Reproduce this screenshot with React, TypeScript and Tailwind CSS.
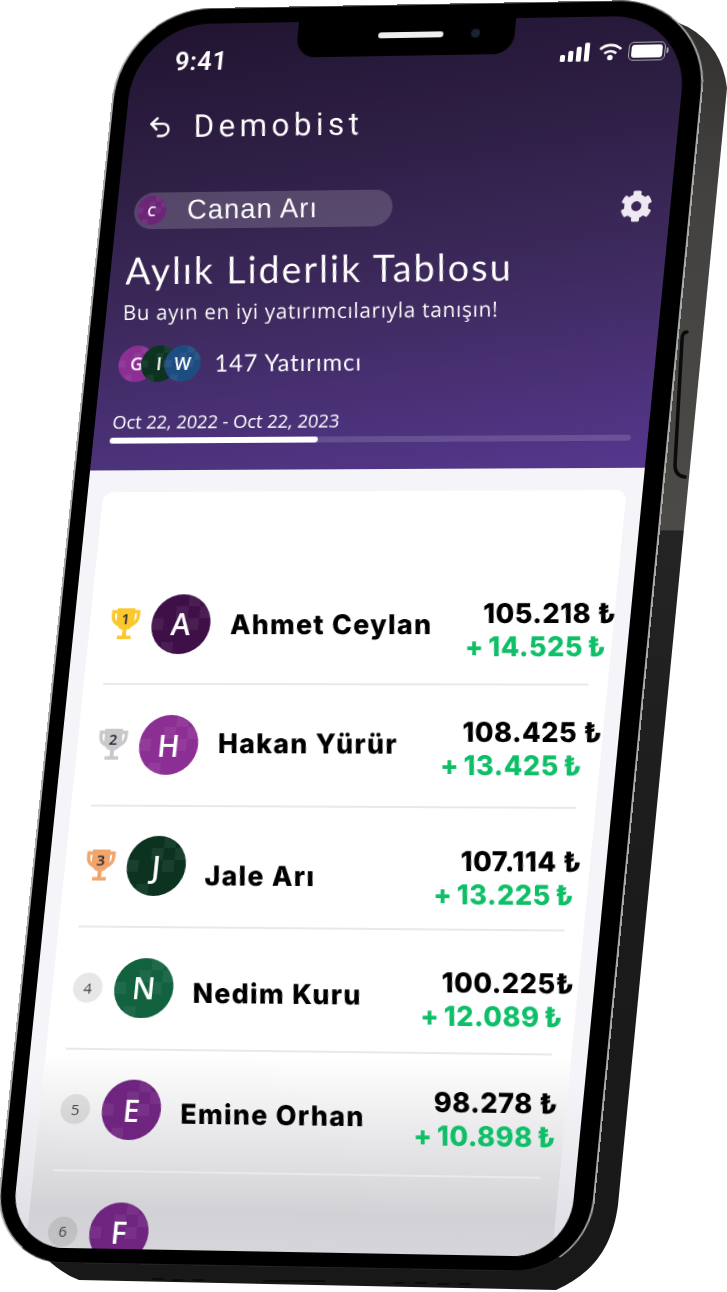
import { Undo2 } from 'lucide-react'
import { FaCog } from 'react-icons/fa'

const rows = [
  { rank: 1, letter: 'A', avatar: 'bg-[#3f1048]', name: 'Ahmet Ceylan', nameY: 'translate-y-[1px]', total: '105.218 ₺', gain: '+ 14.525 ₺', amountY: 'translate-y-[6px]', totalMr: 'mr-[2px]', gainMr: 'mr-[9px]', trophy: '#fbc92e' },
  { rank: 2, letter: 'H', avatar: 'bg-[#8c2f94]', name: 'Hakan Yürür', nameY: '-translate-y-[2px]', total: '108.425 ₺', gain: '+ 13.425 ₺', amountY: 'translate-y-[3px]', totalMr: 'mr-[5px]', gainMr: 'mr-[22px]', trophy: '#c9c9c9' },
  { rank: 3, letter: 'J', avatar: 'bg-[#0b3320]', name: 'Jale Arı', nameY: 'translate-y-[9px]', total: '107.114 ₺', gain: '+ 13.225 ₺', amountY: 'translate-y-[10px]', totalMr: 'mr-[13px]', gainMr: 'mr-[17px]', trophy: '#f0a56c' },
  { rank: 4, letter: 'N', avatar: 'bg-[#12613f]', name: 'Nedim Kuru', nameY: 'translate-y-[5px]', total: '100.225₺', gain: '+ 12.089 ₺', amountY: 'translate-y-[8px]', totalMr: 'mr-[8px]', gainMr: 'mr-[16px]' },
  { rank: 5, letter: 'E', avatar: 'bg-[#6f2580]', name: 'Emine Orhan', nameY: 'translate-y-[3px]', total: '98.278 ₺', gain: '+ 10.898 ₺', amountY: 'translate-y-[5px]', totalMr: 'mr-[13px]', gainMr: 'mr-[12px]' },
  { rank: 6, letter: 'F', avatar: 'bg-[#6f2580]' },
]

const Avatar = ({ letter, color, size, text }: { letter: string; color: string; size: string; text: string }) => (
  <div className={`relative flex shrink-0 items-center justify-center overflow-hidden rounded-full font-['Open_Sans',sans-serif] font-semibold text-white ${color} ${size} ${text}`}>
    <svg className="absolute inset-0 h-full w-full" viewBox="0 0 10 10" fill="#fff" fillOpacity="0.06">
      <rect x="6" y="0" width="2" height="2" />
      <rect x="4" y="2" width="2" height="2" />
      <rect x="8" y="2" width="2" height="2" />
      <rect x="0" y="4" width="2" height="2" />
      <rect x="6" y="4" width="2" height="2" />
      <rect x="2" y="8" width="2" height="2" />
    </svg>
    <span className="relative">{letter}</span>
  </div>
)

const Trophy = ({ rank, color }: { rank: number; color: string }) => (
  <div className="relative h-[32px] w-[30px]">
    <svg className="absolute inset-0" width="30" height="32" viewBox="0 0 30 32">
      <path d="M7 3.5H2.2v4c0 5 3 8 7 9M23 3.5h4.8v4c0 5-3 8-7 9" fill="none" stroke={color} strokeWidth="3.4" />
      <path d="M6 0h18v12c0 6-4 10-9 10s-9-4-9-10z" fill={color} />
      <path d="M13 21h4v7h-4z" fill={color} />
      <path d="M8 27.5h14v3.5H8z" fill={color} />
    </svg>
    <span className="absolute left-0 right-0 top-[1px] text-center font-['Open_Sans',sans-serif] text-[15px] font-semibold leading-[18px] text-[#1f2430]">{rank}</span>
  </div>
)

export default function App() {
  return (
    <div className="relative h-[1292px] w-[727px] overflow-hidden bg-white">
      {/* side of the phone */}
      <svg className="absolute inset-0" width="727" height="1292" viewBox="0 0 727 1292">
        <defs>
          <linearGradient id="side" x1="0" y1="0" x2="0" y2="1292" gradientUnits="userSpaceOnUse">
            <stop offset="0" stopColor="#2f2e2c" />
            <stop offset="0.15" stopColor="#434240" />
            <stop offset="0.41" stopColor="#4b4a47" />
            <stop offset="0.411" stopColor="#242424" />
            <stop offset="0.7" stopColor="#1b1b1b" />
            <stop offset="1" stopColor="#181818" />
          </linearGradient>
        </defs>
        <path d="M640 6L688 27Q722 46 727 88L618 1205C612 1250 590 1275 556 1290L79 1280Q65 1275 50 1262L300 300Z" fill="url(#side)" />
        <path d="M687 332Q682 332 682 340L675 465Q675 476 685 477" fill="none" stroke="#0b0b0b" strokeWidth="3.5" strokeLinecap="round" />
        <g stroke="#0c0c0c" strokeWidth="2" strokeLinecap="round">
          <path d="M153 1279h10M172 1280h10M194 1280h10M264 1281h60M394 1283h10M416 1283h10M438 1284h10M460 1284h10" />
        </g>
      </svg>

      {/* phone front, mapped onto the tilted quad */}
      <div className="absolute left-0 top-0 h-[1230px] w-[560px] origin-top-left [transform:matrix3d(0.967811,-0.018286,0,-0.00002858,-0.10254,0.980893,0,-0.00001011,0,0,1,0,136,25,0,1)]">
        <div className="absolute -bottom-[15px] -left-[17px] -right-[21px] -top-[16px] rounded-b-[72px] rounded-t-[92px] border-x-2 border-b border-t border-x-[#a9a9a9] border-b-[#222] border-t-[#666] bg-black" />

        <div className="relative flex h-full w-full flex-col overflow-hidden rounded-b-[56px] rounded-t-[76px]">
          {/* purple header */}
          <div className="relative flex h-[452px] shrink-0 flex-col bg-[linear-gradient(172deg,#211430_0%,#2e1f45_30%,#3e2a5e_60%,#55378d_100%)] text-white">
            <div className="absolute left-[167px] top-0 h-[36px] w-[220px] rounded-b-[20px] bg-black">
              <div className="absolute left-[82px] top-[12px] h-[6px] w-[66px] rounded-full bg-[#eee]" />
              <div className="absolute left-[176px] top-[10px] h-[9px] w-[9px] rounded-full bg-[#1b2233]" />
            </div>

            <div className="mt-[22px] flex h-[32px] shrink-0 items-center justify-between pl-[44px] pr-[17px]">
              <span className="font-['Roboto',sans-serif] text-[26px] font-semibold leading-none tracking-[0.5px]">9:41</span>
              <div className="flex -translate-y-[3px] items-center">
                <svg width="29" height="19" viewBox="0 0 29 19" fill="#fff">
                  <rect x="0" y="12" width="5" height="7" rx="1.5" />
                  <rect x="8" y="8" width="5" height="11" rx="1.5" />
                  <rect x="16" y="4" width="5" height="15" rx="1.5" />
                  <rect x="24" y="0" width="5" height="19" rx="1.5" />
                </svg>
                <svg className="ml-[9px]" width="24" height="17" viewBox="0 0 24 17" fill="none" stroke="#fff" strokeWidth="2.6">
                  <path d="M1.5 6C7.5 0.5 16.5 0.5 22.5 6" />
                  <path d="M6 10.3C9.5 7.2 14.5 7.2 18 10.3" />
                  <circle cx="12" cy="14.5" r="1.5" fill="#fff" />
                </svg>
                <div className="ml-[6px] flex items-center">
                  <div className="h-[19px] w-[37px] rounded-[5px] border border-[#aaa] p-[2px]">
                    <div className="h-full w-full rounded-[3px] bg-white" />
                  </div>
                  <div className="ml-[1px] h-[6px] w-[2px] rounded-r bg-[#aaa]" />
                </div>
              </div>
            </div>

            <div className="mt-[30px] flex h-[40px] shrink-0 items-center pl-[22px]">
              <Undo2 size={27} strokeWidth={2.2} color="#fff" />
              <span className="ml-[21px] skew-x-[5.9deg] font-['Roboto',sans-serif] text-[32px] leading-none tracking-[4.5px]">Demobist</span>
            </div>

            <div className="mt-[46px] flex h-[38px] shrink-0 items-center justify-between pl-[18px] pr-[18px]">
              <div className="flex h-[37px] w-[263px] items-center rounded-full bg-[#ffffff2b] pl-[3px]">
                <Avatar letter="C" color="bg-[#6d2578]" size="h-[30px] w-[30px]" text="text-[14px]" />
                <span className="ml-[21px] skew-x-[5.9deg] font-['Liberation_Sans',sans-serif] text-[28px] leading-none tracking-[1px]">Canan Arı</span>
              </div>
              <FaCog size={32} color="#eee8f3" className="translate-y-[2px]" />
            </div>

            <h1 className="mt-[19px] h-[44px] shrink-0 skew-x-[5.9deg] pl-[15px] font-['Lato',sans-serif] text-[38px] font-normal leading-[44px] tracking-[2.1px]">Aylık Liderlik Tablosu</h1>
            <p className="mt-[7px] h-[28px] shrink-0 skew-x-[5.9deg] pl-[17px] font-['Open_Sans',sans-serif] text-[21px] leading-[28px] tracking-[0.7px]">Bu ayın en iyi yatırımcılarıyla tanışın!</p>

            <div className="mt-[19px] flex h-[38px] shrink-0 items-center pl-[18px]">
              <Avatar letter="G" color="bg-[#8c2f94]" size="h-[37px] w-[37px]" text="text-[18px]" />
              <div className="-ml-[14px]">
                <Avatar letter="I" color="bg-[#0b3320]" size="h-[37px] w-[37px]" text="text-[18px]" />
              </div>
              <div className="-ml-[13px]">
                <Avatar letter="W" color="bg-[#1d4d80]" size="h-[37px] w-[37px]" text="text-[18px]" />
              </div>
              <span className="ml-[14px] skew-x-[5.9deg] font-['Lato',sans-serif] text-[24px] leading-none tracking-[1px]">147 Yatırımcı</span>
            </div>

            <p className="mt-[28px] h-[24px] shrink-0 pl-[18px] font-['Open_Sans',sans-serif] text-[18.5px] leading-[24px]">Oct 22, 2022 - Oct 22, 2023</p>
            <div className="ml-[17px] mt-[4px] h-[6px] w-[526px] shrink-0 rounded-full bg-[#ffffff24]">
              <div className="h-full w-[212px] rounded-full bg-white" />
            </div>
          </div>

          {/* list */}
          <div className="flex-1 bg-[linear-gradient(to_bottom,#f5f5f9_75%,#d9d9e0_100%)] px-[16px] pt-[22px]">
            <div className="h-[780px] rounded-[10px] bg-[linear-gradient(to_bottom,#fff_72%,#d2d2d6_92%,#d8d8dc_100%)] pt-[73px]">
              <div className="ml-[21px] w-[511px]">
                {rows.map((r) => (
                  <div key={r.rank}>
                    <div className="flex h-[119.4px] items-center">
                      <div className="flex w-[30px] shrink-0 justify-center">
                        {r.trophy ? (
                          <Trophy rank={r.rank} color={r.trophy} />
                        ) : (
                          <div className="flex h-[30px] w-[30px] items-center justify-center rounded-full bg-[#00000018] font-['Open_Sans',sans-serif] text-[15px] text-[#444]">{r.rank}</div>
                        )}
                      </div>
                      <div className="ml-[12px]">
                        <Avatar letter={r.letter} color={r.avatar} size="h-[60px] w-[60px]" text="text-[30px]" />
                      </div>
                      {r.name && (
                        <>
                          <span className={`ml-[20px] skew-x-[5.9deg] font-['Inter',sans-serif] text-[27px] font-extrabold leading-none tracking-[1.3px] text-black ${r.nameY}`}>{r.name}</span>
                          <div className={`ml-auto flex flex-col items-end font-['Inter',sans-serif] text-[27px] font-extrabold leading-[33px] tracking-[0.5px] ${r.amountY}`}>
                            <span className={`skew-x-[5.9deg] text-black ${r.totalMr}`}>{r.total}</span>
                            <span className={`skew-x-[5.9deg] text-[#0fbf68] [word-spacing:-2px] ${r.gainMr}`}>{r.gain}</span>
                          </div>
                        </>
                      )}
                    </div>
                    <div className="-ml-[1px] h-[2px] w-[489px] bg-[#e9e9ec]" />
                  </div>
                ))}
              </div>
            </div>
          </div>
        </div>
      </div>
    </div>
  )
}
